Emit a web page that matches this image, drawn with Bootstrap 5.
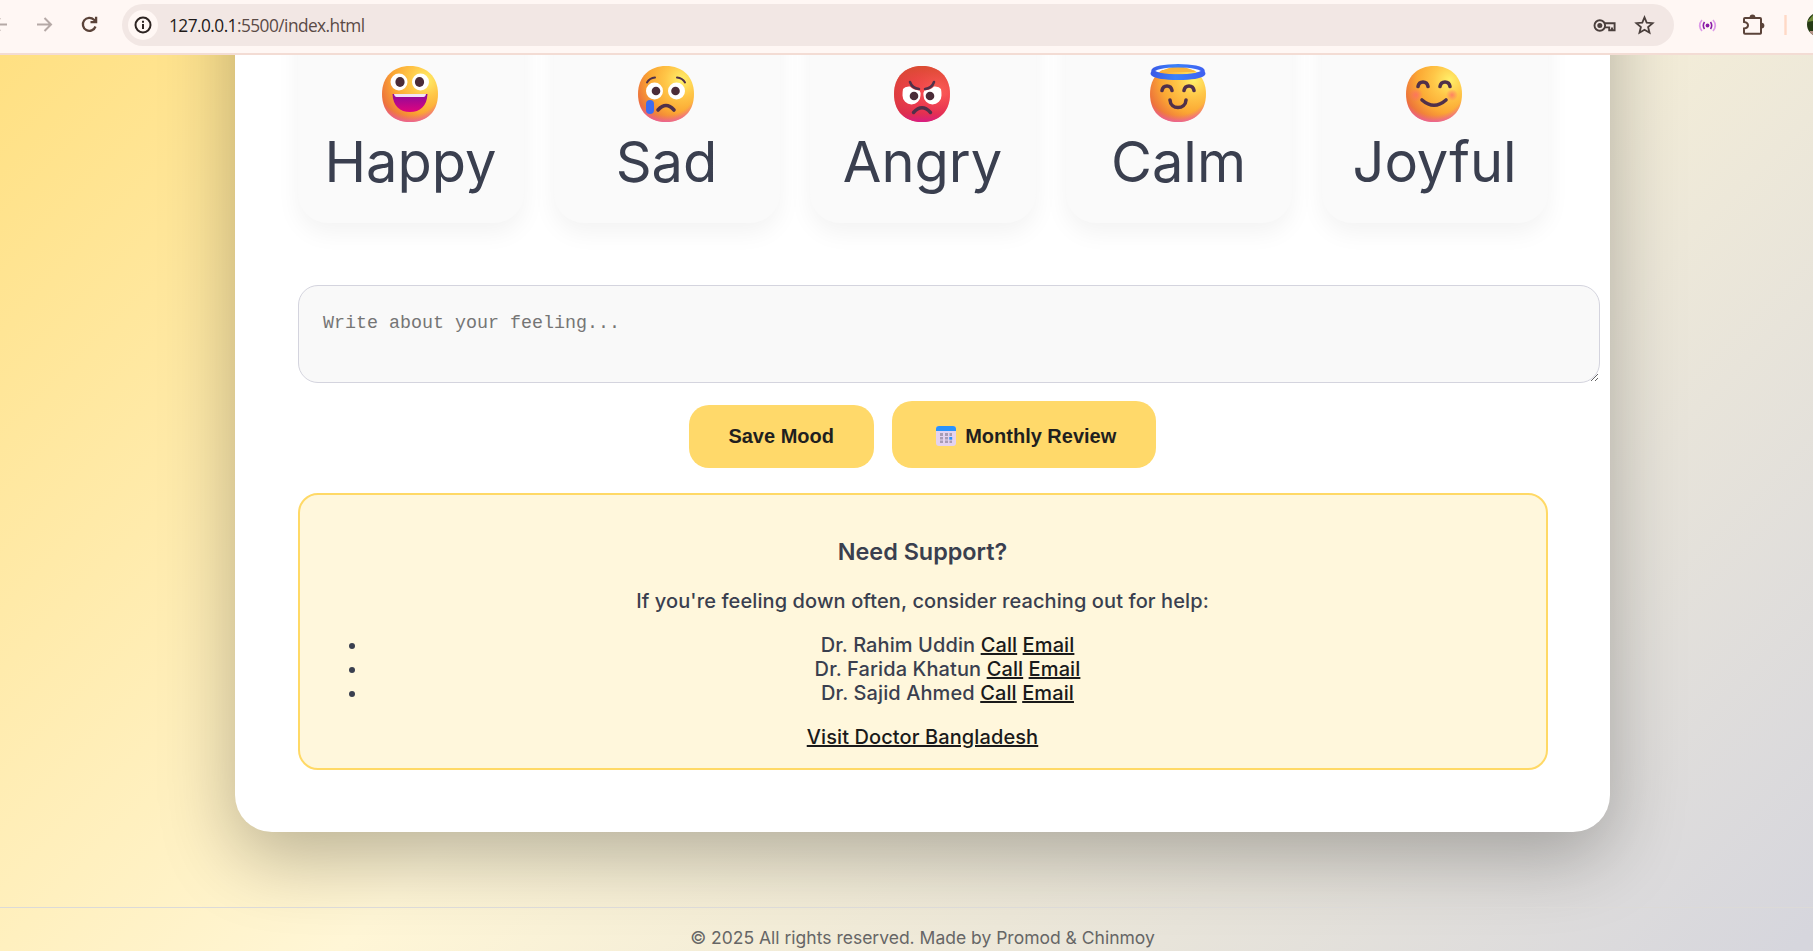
<!DOCTYPE html>
<html lang="en">
<head>
<meta charset="utf-8">
<title>Mood Journal</title>
<link href="https://cdn.jsdelivr.net/npm/bootstrap@5.3.0/dist/css/bootstrap.min.css" rel="stylesheet">
<script src="https://cdn.jsdelivr.net/npm/bootstrap@5.3.0/dist/js/bootstrap.bundle.min.js"></script>
<style>
body{height:951px;overflow:hidden;font-family:Inter,"Liberation Sans",sans-serif;color:#3a3f4f}
.browser-bar{height:55px;background:#fff7f4;border-bottom:2px solid #f3dcd4}
.browser-bar svg{display:block;flex:none}
.address{width:1552px;height:42px;margin:4px 0 0 12px;border-radius:21px;background:#f2e7e4;padding:0 18px 0 6px}
.info-dot{width:30px;height:30px;border-radius:50%;background:#fff7f4}
.url{font:17.3px "Open Sans","Noto Sans",sans-serif;color:#5a4a46;letter-spacing:-.55px;margin-left:11px}
.url b{font-weight:400;color:#1f1a19}
.star{margin-left:17px}
.viewport{height:896px;overflow:hidden}
.page{width:1845px;height:896px;background:linear-gradient(135deg,#ffe082 0%,#fff6d6 45%,#d6d6dd 98%)}
.sheet{width:1375px;height:927px;margin-top:-150px;padding:0 62.5px;background:#fff;border-radius:37px;box-shadow:0 25px 75px rgba(0,0,0,.28)}
.moods{gap:30px}
.mood{height:318px;padding-top:161px;border-radius:30px;background:#fafafa;box-shadow:0 10px 25px rgba(0,0,0,.05);font-size:56px;line-height:68px}
.mood svg{display:block;overflow:visible;margin:0 1px 6px 0}
.note{display:block;width:1302px;height:97.5px;margin-top:62px;border:1px solid #d4d4de;border-radius:20px;background:#f9f9f9;padding:24px 24px 24px 24.5px;font:18.33px/27px "Liberation Mono",monospace}
.note::placeholder{color:#757575}
.pill{border:0;border-radius:20px;background:#ffd96a;color:#1f1f1f;font:bold 20px/23px "Liberation Sans",Arial,sans-serif;padding:20px 39.7px}
.pill:hover{background:#ffd96a;color:#1f1f1f}
.pill-month{padding:24px 39.5px 20px 44px}
.pill-month svg{margin-right:9.5px;margin-top:1px}
.actions{gap:18px;margin:18.5px .5px 0 0;height:67px}
.support{height:277px;margin-top:25px;padding:43px 18px 0;border:2px solid #ffd966;border-radius:20px;background:#fff7dc;font-size:20px;line-height:24px;font-weight:500;letter-spacing:.1px}
.support h3{font-size:23.4px;line-height:28px;font-weight:600;letter-spacing:0;margin:0 0 23px}
.support p{margin:0 0 20px}
.support ul{padding-left:50px;margin:0 0 20px}
.support a{color:#1a1a1a}
.foot{margin-top:75px;border-top:1px solid #dcdad8;padding-top:19px;font-size:17.5px;line-height:22px;color:#666}
</style>
</head>
<body>
<header class="browser-bar d-flex align-items-start">
  <svg width="110" height="50" fill="none"><path d="M-3 24.500H7M37 24.500H51M44.500 18l6.500 6.500-6.500 6.500" stroke="#b5a9a6" stroke-width="2"/><path d="M0 18l-5 6.500 5 6.500" stroke="#b5a9a6" stroke-width="2"/><path d="M95.500 26.500a6.500 6.500 0 1 1-1.500-6.800l2.200 2.200M96.100 16.800v5.400h-5.600" stroke="#5b4339" stroke-width="2.300"/></svg>
  <div class="address d-flex align-items-center">
    <span class="info-dot d-flex align-items-center justify-content-center"><svg width="18" height="18" fill="none" stroke="#2d2422" stroke-width="2"><circle cx="9" cy="9" r="7.500"/><path d="M9 8v5M9 4.800v2"/></svg></span>
    <span class="url"><b>127.0.0.1</b>:5500/index.html</span>
    <svg class="ms-auto" width="24" height="24" fill="none" stroke="#4a3f3c" stroke-width="1.900"><circle cx="6.800" cy="12.500" r="5.300"/><circle cx="6.800" cy="12.500" r="2.500" fill="#4a3f3c" stroke="none"/><path d="M11.800 10.200h9.800v7h-5.400v-2.800h-4.400M19 17v-2.500"/></svg>
    <svg class="star" width="22" height="22" fill="none" stroke="#4a3f3c" stroke-width="1.800"><path d="M10.500 3.300l2.200 5.300 5.900.5-4.500 3.900 1.400 5.700-5-3-5 3 1.400-5.700-4.500-3.900 5.900-.5z"/></svg>
  </div>
  <svg width="139" height="50" fill="none"><g transform="translate(33.500 25.500)"><circle r="1.900" fill="#8a1ca8"/><path d="M-3-3.500q-2.400 3.500 0 7M3-3.500q2.400 3.500 0 7" stroke="#8a1ca8" stroke-width="1.600"/><path d="M-5.500-5.500q-4.600 5.500 0 11M5.500-5.500q4.600 5.500 0 11" stroke="#dd9ae8" stroke-width="1.600"/></g>
    <path d="M71 18h15q1 0 1 1v14q0 .8-.8.800H71q-1 0-1-1v-4.300q4-.5 4-3.300t-4-3.300V19q0-1 1-1z" stroke="#5b4339" stroke-width="2"/><path d="M75.600 17.500a2.900 2.900 0 0 1 5.800 0zM87.500 22.700a2.900 2.900 0 0 1 0 5.800z" fill="#5b4339"/>
    <path d="M111.500 15v20" stroke="#ffd9c6" stroke-width="2.400"/><clipPath id="av"><circle cx="145" cy="24.500" r="12"/></clipPath><g clip-path="url(#av)"><path d="M130 10h20v30h-20z" fill="#263a14"/><path d="M133 22l6-7v6zM134 30l6-2" fill="#718b3b"/><path d="M136 31h5v6h-5z" fill="#b69488"/></g></svg>
</header>

<svg width="0" height="0" class="position-absolute">
  <defs>
    <radialGradient id="sun" cx=".78" cy=".25" r=".9"><stop offset="0" stop-color="#fff06a"/><stop offset=".32" stop-color="#ffc748"/><stop offset=".65" stop-color="#fba733"/><stop offset="1" stop-color="#e9663d"/></radialGradient>
    <radialGradient id="rose" cx=".5" cy=".3" r=".72"><stop offset=".8" stop-color="#f0669a" stop-opacity="0"/><stop offset="1" stop-color="#e95bb8" stop-opacity=".85"/></radialGradient>
    <radialGradient id="rage" cx=".8" cy=".4" r=".85"><stop offset="0" stop-color="#ff6a5c"/><stop offset=".5" stop-color="#f0434b"/><stop offset="1" stop-color="#cf3a35"/></radialGradient>
    <linearGradient id="rageBase" x2="0" y2="1"><stop offset="0" stop-color="#d6502c" stop-opacity=".8"/><stop offset=".5" stop-color="#f5404f" stop-opacity=".3"/><stop offset=".85" stop-color="#e02858" stop-opacity=".7"/><stop offset="1" stop-color="#d81c86"/></linearGradient>
    <linearGradient id="mouth" x2="0" y2="1"><stop offset="0" stop-color="#8c0a9b"/><stop offset="1" stop-color="#e0047d"/></linearGradient>
    <linearGradient id="ring" x2="1"><stop offset="0" stop-color="#3a5ce8"/><stop offset=".45" stop-color="#3b82fb"/><stop offset="1" stop-color="#3f62f2"/></linearGradient>
    <radialGradient id="blush"><stop offset="0" stop-color="#ff6a6a" stop-opacity=".75"/><stop offset="1" stop-color="#ff6a6a" stop-opacity="0"/></radialGradient>
    <path id="face" d="M28 0C44.500 0 56 10.500 56 28S45 56 28 56 0 45.500 0 28 11.500 0 28 0z"/>
  </defs>
</svg>

<main class="viewport">
  <div class="page d-flex flex-column">
    <section class="sheet mx-auto flex-shrink-0">
      <div class="moods d-flex">
        <div class="mood flex-fill w-100 d-flex flex-column align-items-center">
          <svg width="56" height="56"><use href="#face" fill="url(#sun)"/><use href="#face" fill="url(#rose)"/><ellipse cx="17" cy="16" rx="8.500" ry="8.500" fill="#fff"/><ellipse cx="38.500" cy="16" rx="8.500" ry="8.500" fill="#fff"/><ellipse cx="18" cy="16" rx="4.600" ry="5" fill="#4b2c38"/><ellipse cx="37.500" cy="16" rx="4.600" ry="5" fill="#4b2c38"/><path d="M10.500 28h35C45 40 38 46 28 46S11 40 10.500 28z" fill="url(#mouth)"/><path d="M12 28h32q-.5 3-2.500 3h-27Q12.500 31 12 28z" fill="#f1e3f5"/></svg>Happy
        </div>
        <div class="mood flex-fill w-100 d-flex flex-column align-items-center">
          <svg width="56" height="56"><use href="#face" fill="url(#sun)"/><use href="#face" fill="url(#rose)"/><circle cx="16.500" cy="25" r="8.500" fill="#fff"/><circle cx="38.500" cy="25" r="8.500" fill="#fff"/><circle cx="18" cy="25" r="4.300" fill="#4b2c38"/><circle cx="37.500" cy="25" r="4.300" fill="#4b2c38"/><path d="M9 16.500q2.500-4.500 8-5M47 16.500q-2.500-4.500-8-5" fill="none" stroke="#50304a" stroke-width="2" stroke-linecap="round"/><path d="M20 44q8-9 16 0" fill="none" stroke="#50304a" stroke-width="3.600" stroke-linecap="round"/><rect x="8" y="34" width="8" height="14" rx="4" fill="#3e6cf0"/></svg>Sad
        </div>
        <div class="mood flex-fill w-100 d-flex flex-column align-items-center">
          <svg width="56" height="56"><use href="#face" fill="url(#rage)"/><use href="#face" fill="url(#rageBase)"/><path d="M9 23q2-3 7-2.500 3 3.500 9.500 4 1.500 2 1 5a9 9 0 0 1-18 0q0-4 .5-6.500zM47 23q-2-3-7-2.500-3 3.500-9.500 4-1.500 2-1 5a9 9 0 0 0 18 0q0-4-.5-6.500z" fill="#fff"/><circle cx="20" cy="30" r="4.300" fill="#4b2c38"/><circle cx="36" cy="30" r="4.300" fill="#4b2c38"/><path d="M16 16q2 6 9 7M40 16q-2 6-9 7" fill="none" stroke="#50304a" stroke-width="2.500" stroke-linecap="round"/><path d="M19.500 46.500q8.500-9.500 17 0" fill="none" stroke="#50304a" stroke-width="3.400" stroke-linecap="round"/></svg>Angry
        </div>
        <div class="mood flex-fill w-100 d-flex flex-column align-items-center">
          <svg width="56" height="56"><use href="#face" fill="url(#sun)"/><use href="#face" fill="url(#rose)"/><path d="M3 0h50v4H3z" fill="#fafafa"/><path d="M10 6q18-11 36 0z" fill="#f9b43c"/><ellipse cx="28" cy="5" rx="25" ry="5.200" fill="none" stroke="url(#ring)" stroke-width="3.600"/><path d="M3.500 7.500c6 4.800 43 4.800 49 0" fill="none" stroke="url(#ring)" stroke-width="5.600" stroke-linecap="round"/><path d="M12 24.500c1-6 9-6 10 0M34 24.500c1-6 9-6 10 0M20 34c.5 10 15.500 10 16 0" fill="none" stroke="#50304a" stroke-width="3.600" stroke-linecap="round"/></svg>Calm
        </div>
        <div class="mood flex-fill w-100 d-flex flex-column align-items-center">
          <svg width="56" height="56"><use href="#face" fill="url(#sun)"/><use href="#face" fill="url(#rose)"/><circle cx="10" cy="29" r="7" fill="url(#blush)"/><circle cx="46" cy="29" r="6" fill="url(#blush)"/><path d="M12 20.500c1-6 9-6 10 0M34 20.500c1-6 9-6 10 0M16 34q12 10.500 24 0" fill="none" stroke="#50304a" stroke-width="3.600" stroke-linecap="round"/></svg>Joyful
        </div>
      </div>
      <textarea class="note" placeholder="Write about your feeling..."></textarea>
      <div class="actions d-flex justify-content-center align-items-end">
        <button class="btn pill">Save Mood</button>
        <button class="btn pill pill-month d-flex"><svg width="20" height="20"><rect width="20" height="20" rx="3" fill="#e3d2f0"/><path d="M0 5V3q0-3 3-3h14q3 0 3 3v2z" fill="#2b93fb"/><path d="M4 7h3v3H4zM9 7h3v3H9zM13.500 7h2.500v3h-2.500zM4 11h3v2.500H4zM9 11h3v2.500H9zM4 14.500h3V17H4zM9 14.500h3V17H9zM13.500 14.500H16V17h-2.500z" fill="#a79bb5"/><path d="M13.300 11h2.900v2.700h-2.900z" fill="#2b93fb"/></svg>Monthly Review</button>
      </div>
      <div class="support text-center">
        <h3>Need Support?</h3>
        <p>If you're feeling down often, consider reaching out for help:</p>
        <ul>
          <li>Dr. Rahim Uddin <a href="#">Call</a> <a href="#">Email</a></li>
          <li>Dr. Farida Khatun <a href="#">Call</a> <a href="#">Email</a></li>
          <li>Dr. Sajid Ahmed <a href="#">Call</a> <a href="#">Email</a></li>
        </ul>
        <a href="#">Visit Doctor Bangladesh</a>
      </div>
    </section>
    <footer class="foot text-center">© 2025 All rights reserved. Made by Promod &amp; Chinmoy</footer>
  </div>
</main>
</body>
</html>
